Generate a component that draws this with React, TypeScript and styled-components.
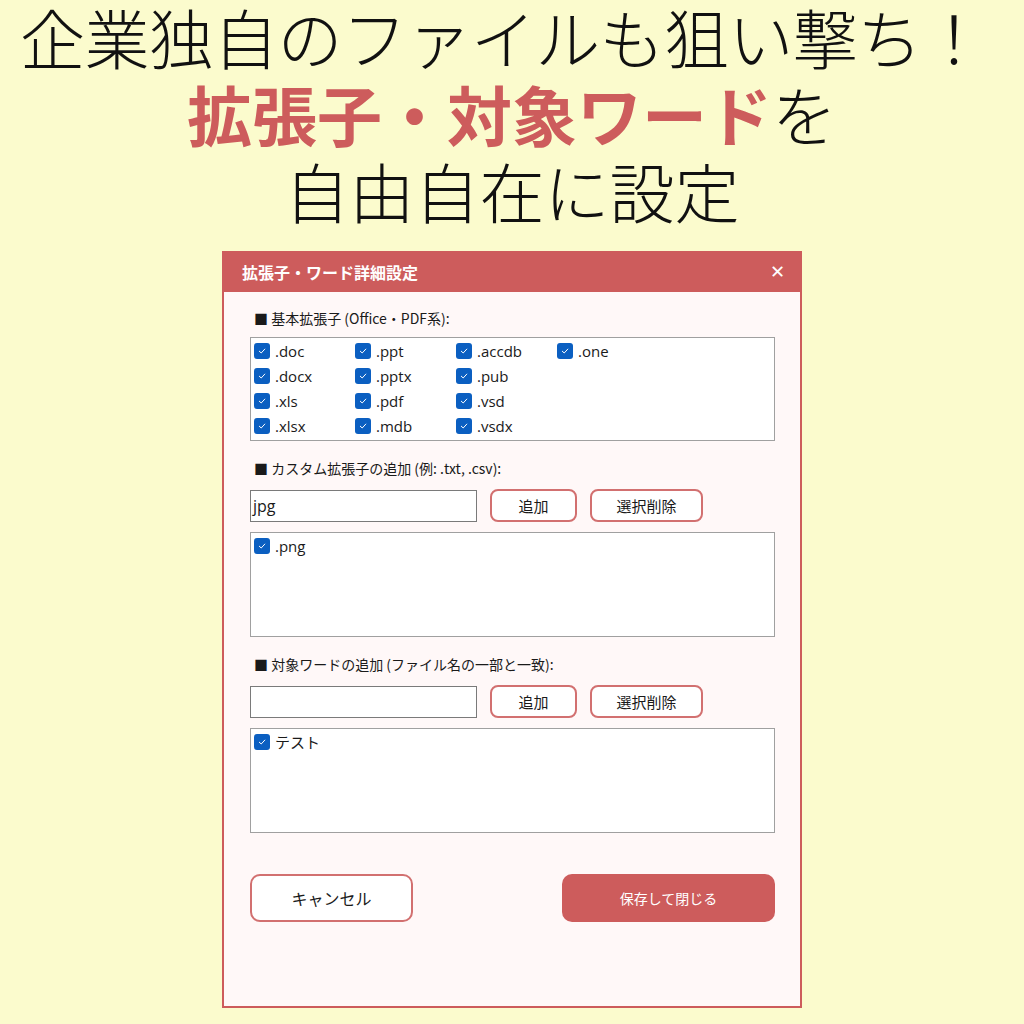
import { createGlobalStyle, styled } from 'styled-components';

const GlobalStyle = createGlobalStyle`
  html, body {
    margin: 0;
    padding: 0;
    background: #fbfbcd;
  }
  body {
    font-family: "Noto Sans CJK JP", "Noto Sans", sans-serif;
  }
`;

const Page = styled.div`
  width: 1024px;
  height: 1024px;
  display: flex;
  flex-direction: column;
  align-items: center;
  background: #fbfbcd;
  overflow: hidden;
`;

const Headline = styled.h1`
  margin: -2px 0 0;
  display: flex;
  flex-direction: column;
  align-items: center;
  font-family: "Noto Sans CJK JP", sans-serif;
  font-size: 65px;
  font-weight: 300;
  line-height: 77px;
  color: #111;
  white-space: nowrap;
`;

const HeadLine = styled.span<{ $tight?: boolean }>`
  display: block;
  letter-spacing: ${p => (p.$tight ? '-0.6px' : '0')};
  padding-right: ${p => (p.$tight ? '18px' : '0')};
`;

const Accent = styled.span`
  color: #cd5c5c;
  font-weight: 700;
`;

const Dialog = styled.div`
  width: 580px;
  height: 757px;
  margin-top: 22px;
  box-sizing: border-box;
  border: 2px solid #cd5c5c;
  border-top: none;
  background: #fff8f8;
  display: flex;
  flex-direction: column;
  font-family: "Open Sans", "Noto Sans CJK JP", sans-serif;
  color: #1a1a1a;
`;

const TitleBar = styled.div`
  height: 41px;
  margin: 0 -2px;
  background: #cd5c5c;
  display: flex;
  align-items: center;
  justify-content: space-between;
  padding: 0 17px 0 20px;
  color: #fff;
  font-family: "Noto Sans CJK JP", sans-serif;
  font-size: 16px;
  font-weight: 700;
`;

const CloseButton = styled.span`
  font-family: "DejaVu Sans", sans-serif;
  font-size: 18px;
  font-weight: 700;
  line-height: 1;
`;

const Body = styled.div`
  display: flex;
  flex-direction: column;
  padding: 17px 25px 0 26px;
`;

const SectionLabel = styled.div<{ $gapTop?: number }>`
  margin-top: ${p => p.$gapTop ?? 0}px;
  padding-left: 4px;
  height: 18px;
  line-height: 18px;
  font-family: "Noto Sans CJK JP", sans-serif;
  font-size: 14px;
  color: #1a1a1a;
  white-space: nowrap;
`;

const ListBox = styled.div<{ $height: number; $gapTop: number }>`
  margin-top: ${p => p.$gapTop}px;
  height: ${p => p.$height}px;
  box-sizing: border-box;
  border: 1px solid #a0a0a0;
  background: #fff;
  padding: 0 3px;
`;

const CheckGrid = styled.div`
  display: grid;
  grid-auto-flow: column;
  grid-template-rows: repeat(4, 25px);
  grid-auto-columns: 101px;
`;

const CheckItem = styled.label`
  display: flex;
  align-items: center;
  gap: 5px;
  height: 25px;
  font-size: 15px;
  color: #1a1a1a;
  white-space: nowrap;
`;

const Box = styled.span`
  width: 16px;
  height: 16px;
  border-radius: 3px;
  background: #0b5fc1;
  display: flex;
  align-items: center;
  justify-content: center;
  flex-shrink: 0;
`;

const InputRow = styled.div`
  margin-top: 12px;
  display: flex;
  align-items: center;
  gap: 13px;
`;

const TextField = styled.div`
  width: 227px;
  height: 32px;
  box-sizing: border-box;
  border: 1px solid #7a7a7a;
  background: #fff;
  display: flex;
  align-items: center;
  padding: 0 2px;
  font-size: 16px;
  color: #1a1a1a;
`;

const OutlineButton = styled.button<{ $width: number; $large?: boolean }>`
  width: ${p => p.$width}px;
  height: ${p => (p.$large ? 48 : 33)}px;
  box-sizing: border-box;
  border: 2px solid #d27070;
  border-radius: ${p => (p.$large ? 10 : 8)}px;
  background: #fff;
  font-family: "Noto Sans CJK JP", sans-serif;
  font-size: ${p => (p.$large ? 16 : 15)}px;
  color: #1a1a1a;
  padding: 0;
`;

const Footer = styled.div`
  margin-top: 41px;
  display: flex;
  justify-content: space-between;
  align-items: center;
`;

const PrimaryButton = styled.button`
  width: 213px;
  height: 48px;
  border: none;
  border-radius: 10px;
  background: #cd5c5c;
  color: #fff;
  font-family: "Noto Sans CJK JP", sans-serif;
  font-size: 14px;
  padding: 0;
`;

function Check({ label }: { label: string }) {
  return (
    <CheckItem>
      <Box>
        <svg width="10" height="10" viewBox="0 0 10 10">
          <path d="M2.3 5.2 L4.2 7 L7.8 3.1" fill="none" stroke="#fff" strokeWidth="1" strokeLinecap="round" strokeLinejoin="round" />
        </svg>
      </Box>
      {label}
    </CheckItem>
  );
}

const basicExtensions = [
  '.doc', '.docx', '.xls', '.xlsx',
  '.ppt', '.pptx', '.pdf', '.mdb',
  '.accdb', '.pub', '.vsd', '.vsdx',
  '.one',
];

export default function App() {
  return (
    <>
      <GlobalStyle />
      <Page>
        <Headline>
          <HeadLine $tight>企業独自のファイルも狙い撃ち！</HeadLine>
          <HeadLine>
            <Accent>拡張子・対象ワード</Accent>を
          </HeadLine>
          <HeadLine>自由自在に設定</HeadLine>
        </Headline>
        <Dialog>
          <TitleBar>
            <span>拡張子・ワード詳細設定</span>
            <CloseButton>✕</CloseButton>
          </TitleBar>
          <Body>
            <SectionLabel>■ 基本拡張子 (Office・PDF系):</SectionLabel>
            <ListBox $height={104} $gapTop={10}>
              <CheckGrid>
                {basicExtensions.map(ext => (
                  <Check key={ext} label={ext} />
                ))}
              </CheckGrid>
            </ListBox>

            <SectionLabel $gapTop={18}>■ カスタム拡張子の追加 (例: .txt, .csv):</SectionLabel>
            <InputRow>
              <TextField>jpg</TextField>
              <OutlineButton $width={87}>追加</OutlineButton>
              <OutlineButton $width={113}>選択削除</OutlineButton>
            </InputRow>
            <ListBox $height={105} $gapTop={10}>
              <Check label=".png" />
            </ListBox>

            <SectionLabel $gapTop={18}>■ 対象ワードの追加 (ファイル名の一部と一致):</SectionLabel>
            <InputRow>
              <TextField />
              <OutlineButton $width={87}>追加</OutlineButton>
              <OutlineButton $width={113}>選択削除</OutlineButton>
            </InputRow>
            <ListBox $height={105} $gapTop={10}>
              <Check label="テスト" />
            </ListBox>

            <Footer>
              <OutlineButton $width={163} $large>キャンセル</OutlineButton>
              <PrimaryButton>保存して閉じる</PrimaryButton>
            </Footer>
          </Body>
        </Dialog>
      </Page>
    </>
  );
}
